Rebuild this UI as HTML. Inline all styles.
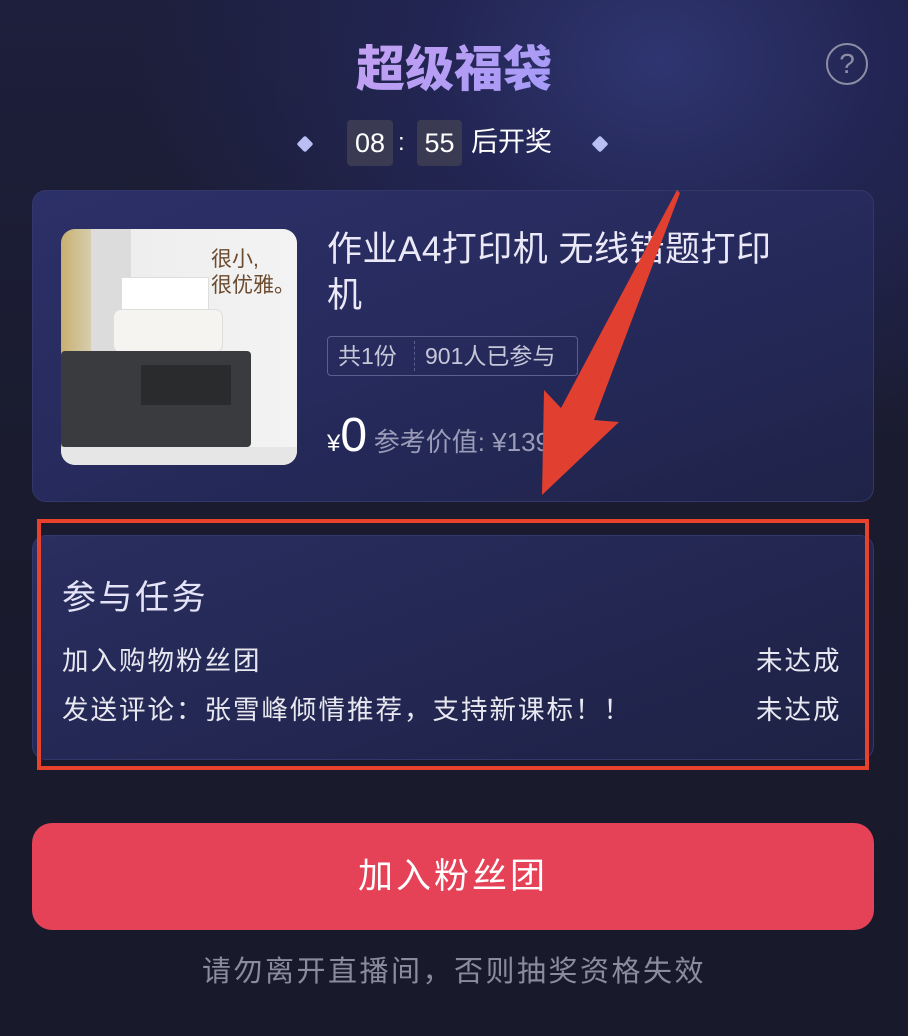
<!DOCTYPE html>
<html><head><meta charset="utf-8"><style>
*{margin:0;padding:0;box-sizing:border-box}
body{width:908px;height:1036px;overflow:hidden;position:relative;font-family:"Liberation Sans","Noto Sans CJK SC",sans-serif;color:#fff;
background:radial-gradient(ellipse 520px 420px at 660px 60px,#2f3570 0%,#222552 45%,rgba(26,27,46,0) 100%),linear-gradient(#1d1f3c 0%,#1a1b2e 45%,#18192a 100%)}
.a{position:absolute}
.title{left:0;width:908px;top:38px;text-align:center;font-size:49px;font-weight:900;letter-spacing:0px;background:linear-gradient(135deg,#f4a9e8,#a79bf7 60%,#8a9cf5);-webkit-background-clip:text;background-clip:text;color:transparent;line-height:64px}
.help{left:826px;top:43px;width:42px;height:42px;border:2px solid #8d8ea5;border-radius:50%;color:#8d8ea5;font-size:28px;text-align:center;line-height:38px}
.dia{width:12px;height:12px;background:#b9bff5;transform:rotate(45deg);top:138px;border-radius:2px}
.box{top:120px;height:46px;background:#3a3b52;border-radius:4px;font-size:27px;text-align:center;line-height:46px;color:#fff}
.card{left:32px;width:842px;border-radius:14px;background:linear-gradient(160deg,#2c3068 0%,#262a5c 50%,#1f2348 100%);border:1px solid #33386a}
.t{font-size:26.5px;letter-spacing:2px;color:#e8e8f0}
</style></head><body>
<div class="a title">超级福袋</div>
<div class="a help">?</div>
<div class="a dia" style="left:299px"></div>
<div class="a dia" style="left:594px"></div>
<div class="a box" style="left:347px;width:46px">08</div>
<div class="a" style="left:398px;top:120px;line-height:46px;font-size:24px">:</div>
<div class="a box" style="left:417px;width:45px">55</div>
<div class="a" style="left:471px;top:120px;line-height:44px;font-size:27px">后开奖</div>

<div class="a card" style="top:190px;height:312px"></div>
<div class="a" style="left:61px;top:229px;width:236px;height:236px;border-radius:14px;overflow:hidden;background:linear-gradient(90deg,#c8b070 0%,#d9d2b8 15%,#eeeeee 30%,#f3f3f3 100%)">
  <div class="a" style="left:30px;top:0;width:40px;height:236px;background:#dcdcdc"></div>
  <div class="a" style="left:150px;top:18px;font-size:21px;line-height:26px;color:#6b4a2e">很小,<br>很优雅。</div>
  <div class="a" style="left:60px;top:48px;width:88px;height:40px;background:#fff;border:1px solid #ddd"></div>
  <div class="a" style="left:52px;top:80px;width:110px;height:44px;background:#f6f4f0;border-radius:8px;border:1px solid #ddd"></div>
  <div class="a" style="left:0;top:122px;width:190px;height:96px;background:#3a3b3e;border-radius:4px"></div>
  <div class="a" style="left:80px;top:136px;width:90px;height:40px;background:#2a2b2d"></div>
  <div class="a" style="left:0;top:218px;width:236px;height:18px;background:#e6e6e6"></div>
</div>
<div class="a" style="left:327px;top:227px;width:500px;font-size:35px;letter-spacing:0.5px;line-height:46px;color:#ebe9f7">作业A4打印机 无线错题打印<br>机</div>
<div class="a" style="left:327px;top:336px;width:251px;height:40px;border:1px solid #5b5f8d;border-radius:4px;font-size:23px;line-height:38px;color:#c6c7d8">
 <span style="position:absolute;left:10px">共1份</span><span style="position:absolute;left:86px;top:4px;height:30px;border-left:1px dashed #5b5f8d"></span><span style="position:absolute;left:97px">901人已参与</span></div>
<div class="a" style="left:327px;top:408px;font-size:24px;line-height:56px">¥<span style="font-size:48px">0</span> <span style="font-size:26px;color:#9a9cb8">参考价值: ¥139</span></div>

<div class="a card" style="top:535px;height:225px;background:linear-gradient(160deg,#2a2e60,#222650 60%,#1e2244)"></div>
<div class="a" style="left:62px;top:576px;font-size:34px;letter-spacing:2.5px;line-height:44px;color:#e4e3f7">参与任务</div>
<div class="a t" style="left:62px;top:639px">加入购物粉丝团</div>
<div class="a t" style="left:756px;top:639px">未达成</div>
<div class="a t" style="left:62px;top:688px">发送评论：张雪峰倾情推荐，支持新课标！！</div>
<div class="a t" style="left:756px;top:688px">未达成</div>
<div class="a" style="left:37px;top:519px;width:832px;height:251px;border:4px solid #e8412c"></div>

<div class="a" style="left:32px;top:823px;width:842px;height:107px;border-radius:20px;background:#e54157;text-align:center;line-height:107px;font-size:35px;letter-spacing:3px">加入粉丝团</div>
<div class="a" style="left:0;width:908px;top:948px;text-align:center;font-size:29px;letter-spacing:2.5px;color:#8b8b9c">请勿离开直播间，否则抽奖资格失效</div>

<svg class="a" style="left:0;top:0" width="908" height="1036"><polygon points="677,190 680,193 594,420 619,422 542,495 544,390 561,408" fill="#e13f2f"/></svg>
</body></html>
